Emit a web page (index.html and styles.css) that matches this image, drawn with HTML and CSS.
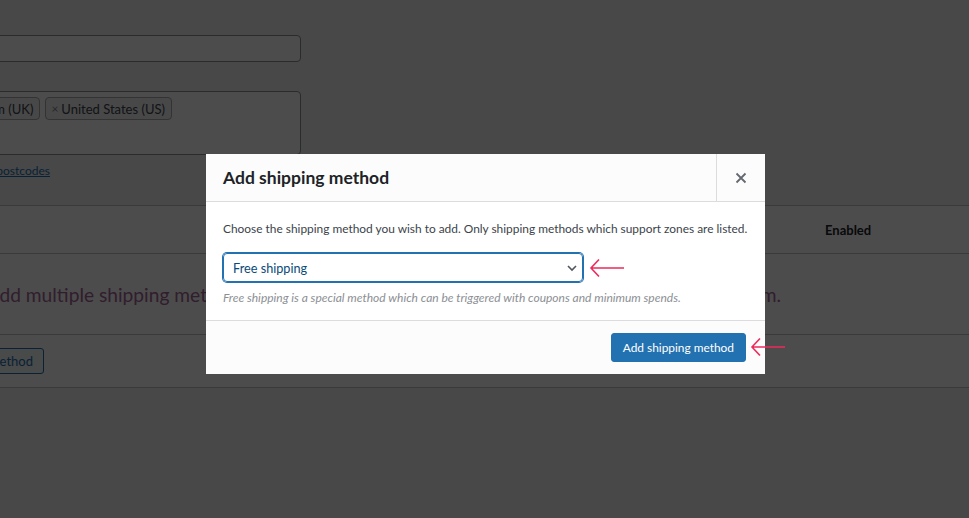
FILE: index.html
```html
<!DOCTYPE html>
<html lang="en">
<head>
<meta charset="utf-8">
<title>Add shipping method</title>
<link rel="stylesheet" href="styles.css">
</head>
<body>
<div class="page">
  <div class="fields">
    <div class="input"></div>
    <div class="textarea">
      <span class="tag"><span class="x">×</span>United Kingdom (UK)</span>
      <span class="tag"><span class="x">×</span>United States (US)</span>
    </div>
    <a class="link" href="#">Limit to specific ZIP/postcodes</a>
  </div>
  <div class="table">
    <div class="thead"><span class="th-enabled">Enabled</span></div>
    <div class="blank"><p>You can add multiple shipping methods within this zone. Only customers within the zone will see them.</p></div>
    <div class="tfoot"><button class="outline">Add shipping method</button></div>
  </div>
</div>

<div class="backdrop"></div>

<div class="modal">
  <header class="modal-head">
    <h1>Add shipping method</h1>
    <button class="close" aria-label="Close">
      <svg width="12" height="12" viewBox="0 0 12 12"><path d="M1.5 1.5L10.5 10.5M10.5 1.5L1.5 10.5" stroke="#646970" stroke-width="1.8" fill="none"/></svg>
    </button>
  </header>
  <div class="modal-body">
    <p class="lead">Choose the shipping method you wish to add. Only shipping methods which support zones are listed.</p>
    <div class="select-row">
      <div class="select">
        <span>Free shipping</span>
        <svg width="12" height="8" viewBox="0 0 12 8"><path d="M2 2L6 6L10 2" stroke="#50575e" stroke-width="1.6" fill="none"/></svg>
      </div>
      <svg class="arrow" width="36" height="20" viewBox="0 0 36 20"><path d="M35 10H2M10 1.5L2 10L10 18.5" stroke="#ee2a5b" stroke-width="1.6" fill="none"/></svg>
    </div>
    <p class="desc">Free shipping is a special method which can be triggered with coupons and minimum spends.</p>
  </div>
  <footer class="modal-foot">
    <button class="primary">Add shipping method</button>
    <svg class="arrow arrow-out" width="36" height="20" viewBox="0 0 36 20"><path d="M35 10H2M10 1.5L2 10L10 18.5" stroke="#ee2a5b" stroke-width="1.6" fill="none"/></svg>
  </footer>
</div>
</body>
</html>
```

FILE: styles.css
```css
* { box-sizing: border-box; }
html, body { margin: 0; height: 100%; }
body {
  background: #f0f0f1;
  font-family: Lato, "Noto Sans", sans-serif;
  color: #3c434a;
  overflow: hidden;
  font-size: 13px;
}
.page { width: 969px; }
.fields {
  margin-left: -300px;
  width: 601px;
  padding-top: 35px;
}
.input {
  height: 27px;
  background: #fff;
  border: 1px solid #8c8f94;
  border-radius: 4px;
}
.textarea {
  margin-top: 29px;
  height: 64px;
  background: #fff;
  border: 1px solid #8c8f94;
  border-radius: 4px;
  padding: 5px 128px 0 0;
  display: flex;
  justify-content: flex-end;
  gap: 5px;
  align-items: flex-start;
}
.tag {
  display: inline-flex;
  align-items: center;
  height: 23px;
  padding: 0 6px 0 5px;
  border: 1px solid #aaa;
  border-radius: 4px;
  background: #f0f0f1;
  font-size: 13px;
  color: #3c434a;
  white-space: nowrap;
  flex-shrink: 0;
}
.tag .x { color: #888; margin-right: 3px; font-size: 12px; }
.link {
  display: block;
  margin-top: 8px;
  width: 350px;
  text-align: right;
  color: #2271b1;
  font-size: 12px;
  text-decoration: underline;
  line-height: 16px;
}
.table {
  margin-top: 26px;
  background: #fff;
  border-top: 1px solid #c3c4c7;
  border-bottom: 1px solid #c3c4c7;
  width: 969px;
}
.thead {
  height: 48px;
  display: flex;
  align-items: center;
  border-bottom: 1px solid #c3c4c7;
  font-weight: 700;
  color: #1d2327;
  font-size: 13px;
}
.th-enabled { margin-left: 825px; }
.blank {
  height: 81px;
  border-bottom: 1px solid #c3c4c7;
  display: flex;
  justify-content: flex-end;
  align-items: center;
  padding-right: 188px;
}
.blank p {
  margin: 0;
  white-space: nowrap;
  color: #a46497;
  font-size: 19.2px;
  flex-shrink: 0;
}
.tfoot {
  height: 52px;
  display: flex;
  justify-content: flex-end;
  align-items: center;
  margin-left: -300px;
  width: 344px;
}
.outline {
  height: 26px;
  padding: 0 10px;
  background: #f6f7f7;
  border: 1px solid #2271b1;
  border-radius: 3px;
  color: #2271b1;
  font-family: inherit;
  font-size: 13px;
  white-space: nowrap;
}
.backdrop {
  position: fixed;
  inset: 0;
  background: rgba(0, 0, 0, 0.7);
}
.modal {
  position: absolute;
  left: 206px;
  top: 154px;
  width: 559px;
  background: #fff;
}
.modal-head {
  height: 48px;
  display: flex;
  align-items: stretch;
  justify-content: space-between;
  background: #fcfcfc;
  border-bottom: 1px solid #dcdcde;
}
.modal-head h1 {
  margin: 0;
  padding-left: 17px;
  display: flex;
  align-items: center;
  font-size: 17.5px;
  font-weight: 700;
  color: #1d2327;
}
.close {
  width: 49px;
  border: 0;
  border-left: 1px solid #dcdcde;
  background: #fcfcfc;
  display: flex;
  align-items: center;
  justify-content: center;
  padding: 0;
}
.modal-body {
  padding: 19px 17px 14px;
}
.lead {
  margin: 0 0 16px;
  font-size: 11.9px;
  color: #3c434a;
  line-height: 16px;
  white-space: nowrap;
}
.select-row {
  display: flex;
  align-items: center;
  gap: 6px;
}
.select {
  width: 360px;
  height: 29px;
  border: 1px solid #2271b1;
  border-radius: 4px;
  box-shadow: 0 0 0 1px #2271b1;
  display: flex;
  align-items: center;
  justify-content: space-between;
  padding: 0 4px 0 9px;
  color: #0a4b78;
  font-size: 12.7px;
}
.desc {
  margin: 8px 0 0;
  font-style: italic;
  color: #8c8f94;
  font-size: 12px;
  line-height: 16px;
  white-space: nowrap;
}
.modal-foot {
  position: relative;
  height: 54px;
  background: #fcfcfc;
  border-top: 1px solid #dcdcde;
  display: flex;
  justify-content: flex-end;
  align-items: center;
  padding-right: 19px;
}
.primary {
  height: 29px;
  padding: 0 11px;
  background: #2271b1;
  border: 1px solid #2271b1;
  border-radius: 3px;
  color: #fff;
  font-family: inherit;
  font-size: 11.9px;
}
.arrow-out {
  position: absolute;
  left: 544px;
  top: 16px;
}
```
